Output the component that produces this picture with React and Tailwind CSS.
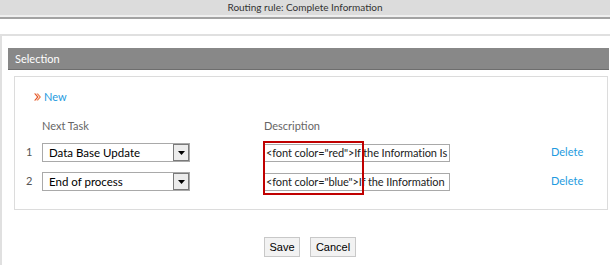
import React from 'react';

const rows = [
    { n: 1, task: 'Data Base Update', desc: '<font color="red">If the Information Is' },
    { n: 2, task: 'End of process', desc: '<font color="blue">If the IInformation' },
];

// Fake combo box like the old ASP.NET dropdowns
const Combo = ({ value }) => (
    <div className="flex h-[19px] w-[148px] border border-[#a9a9a9] bg-white">
        <span className="flex-1 pl-[6px] leading-[17px] text-[11.5px] text-black truncate">{value}</span>
        <span className="flex w-[16px] items-center justify-center border border-[#7a7a7a] bg-[#ececec]">
            <svg width="7" height="4" viewBox="0 0 7 4"><path d="M0 0h7L3.5 4z" fill="#000" /></svg>
        </span>
    </div>
);

const App = () => {
    return (
        <div className="w-[610px] h-[265px] overflow-hidden bg-white font-['Lato',sans-serif]">
            {/* dialog title */}
            <div className="h-[15px] bg-[#dcdcdc] text-center text-[10px] leading-[15px] text-[#333]">
                Routing rule: Complete Information
            </div>
            <div className="h-[4px] bg-[#efefef] border-b-2 border-[#a3a3a3]" />

            <div className="mt-[15px] h-[300px] border-t-2 border-l-2 border-[#e0e0e0] pl-[6px] pt-[12px]">
                <div className="mr-[1px] h-[22px] bg-[#888888] border-b border-[#6e6e6e] pl-[7px] text-[11px] leading-[21px] text-white">
                    Selection
                </div>

                <div className="relative mt-[6px] ml-[6px] mr-[2px] h-[134px] border border-[#dcdcdc]">
                    <div className="flex items-center pl-[19px] pt-[13px] h-[27px] text-[11px] text-[#1e9be0]">
                        <svg width="7" height="8" viewBox="0 0 7 8" className="mr-[3px]">
                            <path d="M0 0.5l3 3.5-3 3.5h1.6l3-3.5-3-3.5z" fill="#e2582c" />
                            <path d="M2.4 0.5l3 3.5-3 3.5h1.6l3-3.5-3-3.5z" fill="#f0804f" />
                        </svg>
                        New
                    </div>

                    <div className="flex mt-[14px] text-[11px] leading-[15px] text-[#666]">
                        <span className="ml-[27px] w-[222px]">Next Task</span>
                        <span>Description</span>
                    </div>

                    <div className="mt-[10px] flex flex-col gap-[10px]">
                        {rows.map(r => (
                            <div key={r.n} className="flex items-center h-[19px]">
                                <span className="w-[27px] pl-[11px] text-[11px] text-[#555]">{r.n}</span>
                                <Combo value={r.task} />
                                <div className="ml-[74px] h-[18px] w-[186px] overflow-hidden whitespace-nowrap border border-[#a9a9a9] pl-[1px] text-[11px] leading-[16px] tracking-[-0.1px] text-[#222]">
                                    {r.desc}
                                </div>
                                <span className="ml-[101px] text-[11px] text-[#1e9be0]">Delete</span>
                            </div>
                        ))}
                    </div>

                    {/* highlight drawn over the description column */}
                    <div className="absolute left-[248px] top-[64px] h-[54px] w-[101px] border-2 border-[#c00000]" />
                </div>

                <div className="mt-[27px] flex gap-[10px] pl-[256px]">
                    <button className="h-[20px] w-[36px] border border-[#c8c8c8] bg-[#f2f2f2] font-['Liberation_Sans',sans-serif] text-[11px] text-black">Save</button>
                    <button className="h-[20px] w-[46px] border border-[#c8c8c8] bg-[#f2f2f2] font-['Liberation_Sans',sans-serif] text-[11px] text-black">Cancel</button>
                </div>
            </div>
        </div>
    );
};

export default App;
